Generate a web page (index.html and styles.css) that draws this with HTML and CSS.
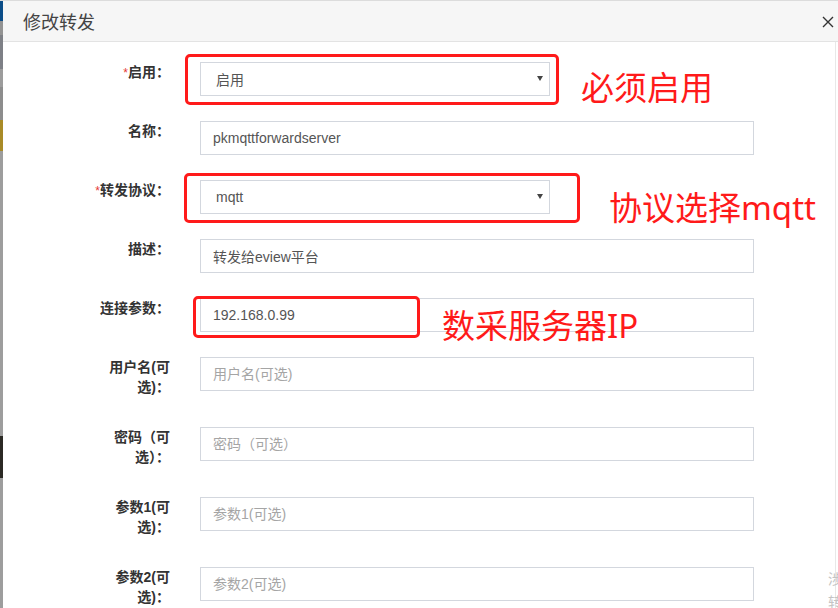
FILE: index.html
```html
<!DOCTYPE html>
<html lang="zh-CN">
<head>
<meta charset="utf-8">
<title>修改转发</title>
<link rel="stylesheet" href="styles.css">
</head>
<body>
<div class="screen">
  <div class="bg-strip"></div>
  <div class="modal">
    <div class="modal-header">
      <span class="modal-title">修改转发</span>
      <svg class="close" width="12" height="12" viewBox="0 0 12 12"><path d="M1 1 L11 11 M11 1 L1 11" stroke="#333" stroke-width="1.4" fill="none"/></svg>
    </div>
    <div class="modal-body">
      <div class="row">
        <label class="label"><span class="req">*</span>启用<span class="colon">：</span></label>
        <div class="select"><span>启用</span><span class="caret"></span></div>
      </div>
      <div class="row">
        <label class="label">名称<span class="colon">：</span></label>
        <input class="input" type="text" value="pkmqttforwardserver">
      </div>
      <div class="row">
        <label class="label"><span class="req">*</span>转发协议<span class="colon">：</span></label>
        <div class="select"><span>mqtt</span><span class="caret"></span></div>
      </div>
      <div class="row">
        <label class="label">描述<span class="colon">：</span></label>
        <input class="input" type="text" value="转发给eview平台">
      </div>
      <div class="row">
        <label class="label">连接参数<span class="colon">：</span></label>
        <input class="input" type="text" value="192.168.0.99">
      </div>
      <div class="row">
        <label class="label">用户名(可选)<span class="colon">：</span></label>
        <input class="input" type="text" placeholder="用户名(可选)">
      </div>
      <div class="row">
        <label class="label">密码<span class="colon">（</span>可选<span class="colon">）：</span></label>
        <input class="input" type="text" placeholder="密码（可选）">
      </div>
      <div class="row">
        <label class="label">参数1(可选)<span class="colon">：</span></label>
        <input class="input" type="text" placeholder="参数1(可选)">
      </div>
      <div class="row">
        <label class="label">参数2(可选)<span class="colon">：</span></label>
        <input class="input" type="text" placeholder="参数2(可选)">
      </div>
    </div>
  </div>

  <div class="mark mark-1"></div>
  <div class="mark mark-2"></div>
  <div class="mark mark-3"></div>
  <div class="note note-1">必须启用</div>
  <div class="note note-2">协议选择mqtt</div>
  <div class="note note-3">数采服务器IP</div>
  <div class="ghost ghost-1">涉</div>
  <div class="ghost ghost-2">转</div>
</div>
</body>
</html>
```

FILE: styles.css
```css
* { box-sizing: border-box; }
html, body {
  margin: 0;
  padding: 0;
  width: 838px;
  height: 608px;
  overflow: hidden;
  background: #fff;
  font-family: "Liberation Sans", "Noto Sans CJK SC", sans-serif;
}
.screen {
  position: relative;
  display: flex;
  width: 838px;
  height: 608px;
  overflow: hidden;
  border-top: 1px solid #dcdcdc;
}
.bg-strip {
  width: 3px;
  flex: none;
  background: linear-gradient(to bottom,
    #0b4d88 0px, #0b4d88 20px,
    #939393 20px, #939393 34px,
    #7e8086 34px, #7e8086 68px,
    #9c9c9c 68px, #9c9c9c 86px,
    #8d8d8d 86px, #8d8d8d 119px,
    #a98b27 119px, #a98b27 150px,
    #9d9d9d 150px, #9d9d9d 435px,
    #2b2924 435px, #2b2924 477px,
    #9d9d9d 477px, #9d9d9d 608px);
}
.modal {
  flex: 1;
  display: flex;
  flex-direction: column;
  background: #fff;
}
.modal-header {
  height: 41px;
  flex: none;
  display: flex;
  align-items: center;
  justify-content: space-between;
  padding: 0 4px 0 20px;
  background: #f6f6f6;
  border-bottom: 1px solid #e3e3e3;
}
.modal-title {
  font-family: "Noto Sans CJK SC", sans-serif;
  font-size: 18px;
  color: #444;
  line-height: 20px;
}
.close {
  display: block;
  margin-top: 1px;
}
.modal-body {
  flex: 1;
  padding: 20px 0 0 87px;
  margin-right: 2px;
  border-right: 1px solid #e8e8e8;
}
.row {
  display: flex;
  align-items: flex-start;
  margin-bottom: 25px;
}
.label {
  width: 80px;
  flex: none;
  margin-right: 30px;
  padding-bottom: 5px;
  text-align: right;
  font-size: 14px;
  line-height: 20px;
  font-weight: bold;
  color: #333;
}
.colon {
  font-family: "Liberation Sans", "Noto Sans CJK TC", sans-serif;
}
.req {
  color: #e53935;
  font-size: 12px;
  font-weight: normal;
}
.input, .select {
  height: 34px;
  border: 1px solid #d3d7de;
  font-family: inherit;
  font-size: 14px;
  color: #555;
  background: #fff;
  outline: none;
}
.input {
  width: 554px;
  padding: 0 12px;
  margin: 0;
  border-radius: 0;
}
.input::placeholder { color: #a5a5a5; }
.select {
  width: 350px;
  display: flex;
  align-items: center;
  justify-content: space-between;
  padding: 0 6px 0 15px;
}
.caret {
  width: 0;
  height: 0;
  border-left: 3.5px solid transparent;
  border-right: 3.5px solid transparent;
  border-top: 5px solid #444;
  margin-top: -1px;
}
.mark {
  position: absolute;
  border: 3.5px solid #ff1a1a;
  border-radius: 5px;
}
.mark-1 { left: 185px; top: 53px; width: 374px; height: 51px; }
.mark-2 { left: 184px; top: 172px; width: 396px; height: 50px; }
.mark-3 { left: 193px; top: 295px; width: 227px; height: 42px; }
.note {
  position: absolute;
  font-family: "Noto Sans", "Noto Sans CJK SC", sans-serif;
  font-size: 33px;
  line-height: 1;
  color: #ff1a1a;
  white-space: nowrap;
}
.note-1 { left: 581px; top: 70px; }
.note-2 { left: 609px; top: 190px; }
.note-3 { left: 442px; top: 308px; }
.ghost {
  position: absolute;
  font-family: "Noto Sans CJK SC", sans-serif;
  font-size: 14px;
  color: #c4c4c4;
  line-height: 1;
}
.ghost-1 { left: 828px; top: 570px; }
.ghost-2 { left: 828px; top: 593px; }
```
